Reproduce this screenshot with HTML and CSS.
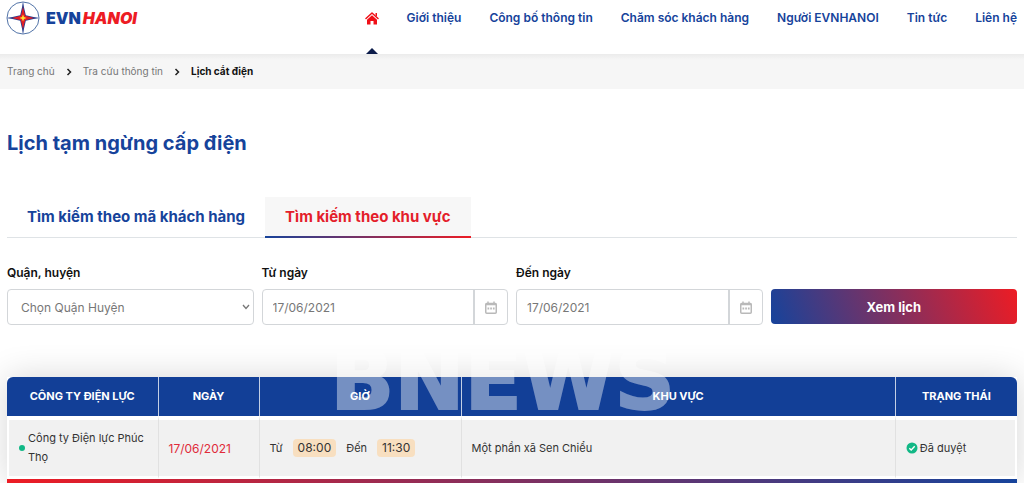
FILE: index.html
```html
<!DOCTYPE html>
<html lang="vi">
<head>
<meta charset="utf-8">
<meta name="viewport" content="width=device-width, initial-scale=1">
<title>Lịch tạm ngừng cấp điện</title>
<link rel="stylesheet" href="styles.css">
</head>
<body>
<header class="header">
  <a class="logo" href="#" aria-label="EVNHANOI">
    <svg class="logo-mark" viewBox="0 0 34 34" aria-hidden="true">
      <circle cx="17" cy="17" r="16" fill="#fff" stroke="#5274a8" stroke-width="1"/>
      <path d="M17 1V33M1 17H33" stroke="#7c8fbd" stroke-width="1"/>
      <path d="M17 2L19.800 14.200L32 17L19.800 19.800L17 32L14.200 19.800L2 17L14.200 14.200Z" fill="#263b8c"/>
      <path d="M17 6L19.200 14.800L28 17L19.200 19.200L17 28L14.800 19.200L6 17L14.800 14.800Z" fill="#e31e26"/>
      <path d="M17 13.500L18 16L20.500 17L18 18L17 20.500L16 18L13.500 17L16 16Z" fill="#ffe033"/>
    </svg>
    <span class="logo-text"><span>EVN</span><span class="logo-city">HANOI</span></span>
  </a>
  <nav class="nav" aria-label="Chính">
    <a class="nav-link nav-home" href="#" aria-label="Trang chủ">
      <svg class="home-icon" viewBox="0 0 14 13" aria-hidden="true">
        <path d="M1 6.500L7 1L13 6.500" fill="none" stroke="#f01018" stroke-width="1.500" stroke-linecap="round" stroke-linejoin="round"/>
        <path d="M10.500 1H12V4.500L10.500 3.200ZM7 3.200L12 7.800V12.500H8.500V9H5.500V12.500H2V7.800Z" fill="#f01018"/>
      </svg>
    </a>
    <a class="nav-link" href="#">Giới thiệu</a>
    <a class="nav-link" href="#">Công bố thông tin</a>
    <a class="nav-link" href="#">Chăm sóc khách hàng</a>
    <a class="nav-link" href="#">Người EVNHANOI</a>
    <a class="nav-link" href="#">Tin tức</a>
    <a class="nav-link" href="#">Liên hệ</a>
  </nav>
</header>
<nav class="crumbs" aria-label="Đường dẫn">
  <a class="crumb" href="#">Trang chủ</a>
  <svg class="crumb-sep" viewBox="0 0 6 8" aria-hidden="true"><path d="M1.500 1L4.500 4L1.500 7"/></svg>
  <a class="crumb" href="#">Tra cứu thông tin</a>
  <svg class="crumb-sep" viewBox="0 0 6 8" aria-hidden="true"><path d="M1.500 1L4.500 4L1.500 7"/></svg>
  <span class="crumb crumb-current">Lịch cắt điện</span>
</nav>
<main class="main">
  <h1 class="title">Lịch tạm ngừng cấp điện</h1>
  <div class="tabs" role="tablist">
    <button class="tab" type="button" role="tab" aria-selected="false">Tìm kiếm theo mã khách hàng</button>
    <button class="tab tab-active" type="button" role="tab" aria-selected="true">Tìm kiếm theo khu vực</button>
  </div>
  <form class="filters">
    <div class="field">
      <label class="label" for="district">Quận, huyện</label>
      <div class="select-wrap">
        <select class="control select" id="district"><option>Chọn Quận Huyện</option></select>
        <svg class="select-arrow" viewBox="0 0 8 6" aria-hidden="true"><path d="M1 1L4 4.500L7 1"/></svg>
      </div>
    </div>
    <div class="field">
      <label class="label" for="from">Từ ngày</label>
      <div class="control date">
        <input class="date-input" id="from" type="text" value="17/06/2021">
        <button class="date-button" type="button" aria-label="Chọn từ ngày">
          <svg class="calendar" viewBox="0 0 12 13" aria-hidden="true"><rect x="0.750" y="2.500" width="10.500" height="9.750" rx="1"/><path d="M0.500 3.500H11.500M3 0.500V3M9 0.500V3"/><path class="calendar-days" d="M2.500 7.500H4.200M5.200 7.500H6.900M7.900 7.500H9.600"/></svg>
        </button>
      </div>
    </div>
    <div class="field">
      <label class="label" for="to">Đến ngày</label>
      <div class="control date">
        <input class="date-input" id="to" type="text" value="17/06/2021">
        <button class="date-button" type="button" aria-label="Chọn đến ngày">
          <svg class="calendar" viewBox="0 0 12 13" aria-hidden="true"><rect x="0.750" y="2.500" width="10.500" height="9.750" rx="1"/><path d="M0.500 3.500H11.500M3 0.500V3M9 0.500V3"/><path class="calendar-days" d="M2.500 7.500H4.200M5.200 7.500H6.900M7.900 7.500H9.600"/></svg>
        </button>
      </div>
    </div>
    <button class="submit" type="button">Xem lịch</button>
  </form>
  <section class="results">
    <table class="table">
      <colgroup><col class="col-company"><col class="col-date"><col class="col-time"><col class="col-area"><col class="col-status"></colgroup>
      <thead>
        <tr><th>CÔNG TY ĐIỆN LỰC</th><th>NGÀY</th><th>GIỜ</th><th>KHU VỰC</th><th>TRẠNG THÁI</th></tr>
      </thead>
      <tbody>
        <tr>
          <td><div class="company"><span class="dot"></span><span>Công ty Điện lực Phúc Thọ</span></div></td>
          <td class="date-cell">17/06/2021</td>
          <td><div class="times"><span>Từ</span><span class="time">08:00</span><span>Đến</span><span class="time">11:30</span></div></td>
          <td>Một phần xã Sen Chiểu</td>
          <td><div class="status"><svg class="check" viewBox="0 0 12 12" aria-hidden="true"><circle cx="6" cy="6" r="5.500" fill="#12b886"/><path d="M3.300 6.200L5.200 8L8.700 4.300" fill="none" stroke="#fff" stroke-width="1.400"/></svg><span>Đã duyệt</span></div></td>
        </tr>
      </tbody>
    </table>
    <div class="watermark" aria-hidden="true">BNEWS</div>
  </section>
</main>
</body>
</html>
```
FILE: styles.css
```css
* { box-sizing: border-box; }
body {
  margin: 0;
  background: #fff;
  color: #333;
  font-family: Inter, "Noto Sans", sans-serif;
  font-size: 12px;
  line-height: 19px;
  overflow-x: hidden;
}
a { color: inherit; text-decoration: none; }
button, input, select { font-family: inherit; }

.header {
  display: flex;
  justify-content: space-between;
  align-items: flex-start;
  height: 54px;
  padding: 0 7px 0 6px;
  background: #fff;
}
.logo { display: flex; align-items: center; gap: 6px; padding-top: 1px; }
.logo-mark { width: 34px; height: 34px; }
.logo-text {
  display: flex;
  gap: 2px;
  color: #16439b;
  font-size: 16px;
  font-weight: 900;
  line-height: 20px;
}
.logo-city { color: #ed1c24; font-style: italic; }
.nav { display: flex; gap: 28px; height: 54px; }
.nav-link {
  color: #16439b;
  font-weight: 700;
  line-height: 16px;
  padding-top: 10px;
  white-space: nowrap;
}
.nav-home {
  display: flex;
  flex-direction: column;
  justify-content: space-between;
  align-items: center;
  padding-top: 12px;
}
.home-icon { width: 14px; height: 13px; }
.nav-home::after {
  content: "";
  border: 6px solid transparent;
  border-top: 0;
  border-bottom-color: #0c1c4a;
}
.nav-link { font-weight: 600; }

.crumbs {
  display: flex;
  align-items: center;
  gap: 11px;
  height: 35px;
  padding: 0 7px;
  background: linear-gradient(#ebebeb, #f6f6f6 6px);
  font-size: 10px;
}
.crumb { color: #777; }
.crumb-current { color: #111; font-weight: 700; }
.crumb-sep { width: 6px; height: 8px; fill: none; stroke: #222; stroke-width: 1.500; }

.main { padding: 40px 7px 0; }
.title { margin: 0 0 40px; color: #16439b; font-size: 20px; font-weight: 700; line-height: 28px; }
.tabs { display: flex; border-bottom: 1px solid #dfe3e6; }
.tab {
  height: 41px;
  margin-bottom: -1px;
  padding: 0 20px;
  border: 0;
  border-bottom: 2px solid transparent;
  background: none;
  color: #16439b;
  font-size: 15px;
  font-weight: 700;
  white-space: nowrap;
}
.tab-active {
  background: #f7f7f7;
  border-image: linear-gradient(90deg, #16439b, #ed1c24) 1;
  color: #e41e2b;
}

.filters {
  display: grid;
  grid-template-columns: repeat(4, 1fr);
  gap: 8px;
  align-items: end;
  padding-top: 27px;
}
.field { display: flex; flex-direction: column; gap: 8px; min-width: 0; }
.label { color: #111; font-weight: 600; line-height: 16px; }
.control {
  width: 100%;
  height: 36px;
  border: 1px solid #d3d6d9;
  border-radius: 4px;
  background: #fff;
  color: #777;
  font-size: 12px;
}
.select-wrap { display: grid; align-items: center; }
.select { grid-area: 1 / 1; appearance: none; padding: 0 20px 0 13px; }
.select-arrow {
  grid-area: 1 / 1;
  justify-self: end;
  width: 8px;
  height: 6px;
  margin-right: 4px;
  fill: none;
  stroke: #777;
  stroke-width: 1.300;
  pointer-events: none;
}
.date { display: flex; }
.date-input {
  flex: 1;
  min-width: 0;
  padding: 0 10px;
  border: 0;
  background: none;
  color: #777;
  font-size: 12px;
}
.date-button {
  display: flex;
  align-items: center;
  justify-content: center;
  width: 34px;
  padding: 0;
  border: 0;
  border-left: 2px solid #d3d6d9;
  background: none;
}
.calendar { width: 12px; height: 13px; fill: none; stroke: #b9b9b9; stroke-width: 1.500; }
.calendar-days { stroke-width: 2; }
.submit {
  height: 35px;
  margin-bottom: 1px;
  border: 0;
  border-radius: 4px;
  background: linear-gradient(70deg, #16439b, #ed1c24);
  color: #fff;
  font-size: 13px;
  font-weight: 700;
}

.results {
  position: relative;
  margin-top: 52px;
  border-bottom: 4px solid;
  border-image: linear-gradient(90deg, #ed1c24, #16439b) 1;
  box-shadow: 0 0 32px rgba(0, 0, 0, 0.16);
}
.table {
  width: 100%;
  table-layout: fixed;
  border-collapse: separate;
  border-spacing: 0;
  background: #fff;
  border-radius: 6px 6px 0 0;
  overflow: hidden;
}
.col-company { width: 15%; }
.col-date { width: 10%; }
.col-time { width: 20%; }
.col-area { width: 43%; }
.col-status { width: 12%; }
th {
  height: 39px;
  padding: 0;
  background: #123f97;
  border-right: 1px solid #c3cfe5;
  color: #fff;
  font-size: 11px;
  font-weight: 700;
}
td {
  height: 63px;
  padding: 0 10px;
  background: #f1f1f1;
  border-top: 4px solid #fff;
  border-bottom: 3px solid #fff;
  border-right: 1px solid #e1e1e1;
  font-size: 11px;
}
td:first-child { border-left: 2px solid #fff; }
th:last-child { border-right: 0; }
td:last-child { border-right: 2px solid #fff; }
.date-cell { color: #e02b3a; font-size: 12px; }
.company { display: flex; align-items: center; gap: 3px; }
.dot { flex: none; width: 6px; height: 6px; border-radius: 50%; background: #12b886; }
.times { display: flex; align-items: center; gap: 10px; }
.time { padding: 0 5px; border-radius: 4px; background: #f8dfc0; font-size: 12px; line-height: 18px; }
.status { display: flex; align-items: center; gap: 2px; }
.check { width: 12px; height: 12px; }
.watermark {
  position: absolute;
  left: 32%;
  top: -39px;
  color: #fff;
  font-family: "DejaVu Sans", sans-serif;
  font-size: 84px;
  font-weight: 700;
  line-height: 84px;
  -webkit-text-stroke: 2px #fff;
  opacity: 0.42;
  pointer-events: none;
}
```
